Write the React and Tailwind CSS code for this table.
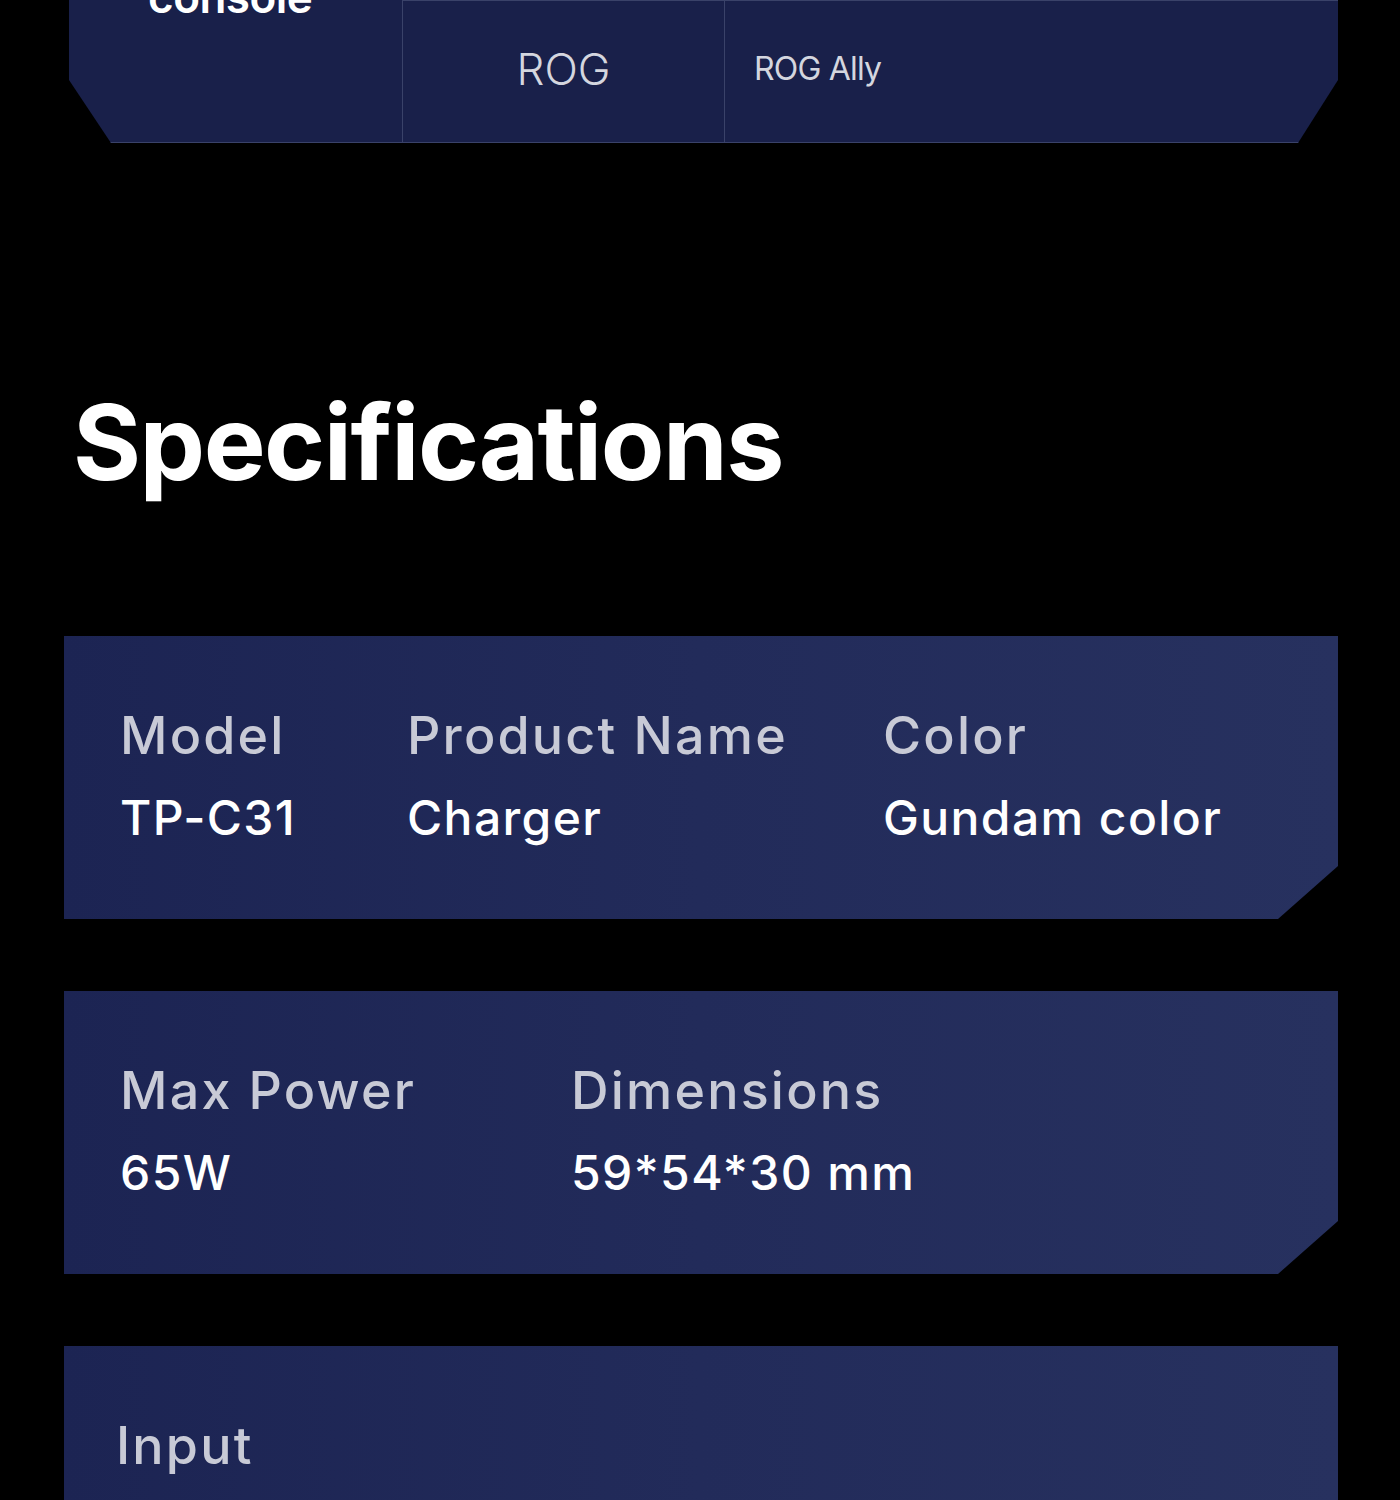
const specs = [
  {
    cols: ['w-[287px]', 'w-[476px]', ''],
    items: [
      { label: 'Model', value: 'TP-C31' },
      { label: 'Product Name', value: 'Charger' },
      { label: 'Color', value: 'Gundam color' },
    ],
  },
  {
    cols: ['w-[451px]', ''],
    items: [
      { label: 'Max Power', value: '65W' },
      { label: 'Dimensions', value: '59*54*30 mm' },
    ],
  },
];

function SpecCard({ children }) {
  return (
    <div className="ml-[64px] h-[283px] w-[1274px] bg-gradient-to-r from-[#1c2453] via-[#222b5a] to-[#27315f] [clip-path:polygon(0_0,100%_0,100%_230px,calc(100%-60px)_100%,0_100%)]">
      {children}
    </div>
  );
}

export default function App() {
  return (
    <div className="min-h-[1500px] overflow-hidden bg-black font-['Inter','Liberation_Sans',sans-serif]">
      {/* tail of the compatibility table */}
      <div className="ml-[69px] grid h-[143px] w-[1269px] grid-cols-[334px_322px_1fr] border-b border-[#3a4269] bg-[#19204a] [clip-path:polygon(0_0,100%_0,100%_80px,calc(100%-40px)_100%,42px_100%,0_80px)]">
        <div className="border-r border-[#3a4269] pl-[79px]">
          <p className="-mt-[25px] text-[44px] font-semibold leading-none tracking-[-0.5px] text-white">console</p>
        </div>
        <div className="flex items-center justify-center border-r border-t border-[#3a4269] pb-[6px] text-[44px] font-light text-[#d4d6df]">
          ROG
        </div>
        <div className="flex items-center border-t border-[#3a4269] pb-[6px] pl-[29px] text-[32px] tracking-[-0.8px] text-[#d4d6df]">
          ROG Ally
        </div>
      </div>

      <h2 className="ml-[73px] mt-[247px] text-[104px] font-bold leading-none tracking-[-1.5px] text-white">
        Specifications
      </h2>

      <div className="mt-[142px] flex flex-col gap-[72px]">
        {specs.map((row, i) => (
          <SpecCard key={i}>
            <div className="flex pl-[56px] pt-[74px]">
              {row.items.map((item, j) => (
                <div key={item.label} className={row.cols[j]}>
                  <p className="text-[52px] font-medium leading-none tracking-[2.2px] text-[#c8cad6]">{item.label}</p>
                  <p className="mt-[32px] text-[48px] font-medium leading-none tracking-[1.4px] text-white">{item.value}</p>
                </div>
              ))}
            </div>
          </SpecCard>
        ))}
        <SpecCard>
          <div className="pl-[52px] pt-[74px]">
            <p className="text-[52px] font-medium leading-none tracking-[2.2px] text-[#c8cad6]">Input</p>
          </div>
        </SpecCard>
      </div>
    </div>
  );
}
